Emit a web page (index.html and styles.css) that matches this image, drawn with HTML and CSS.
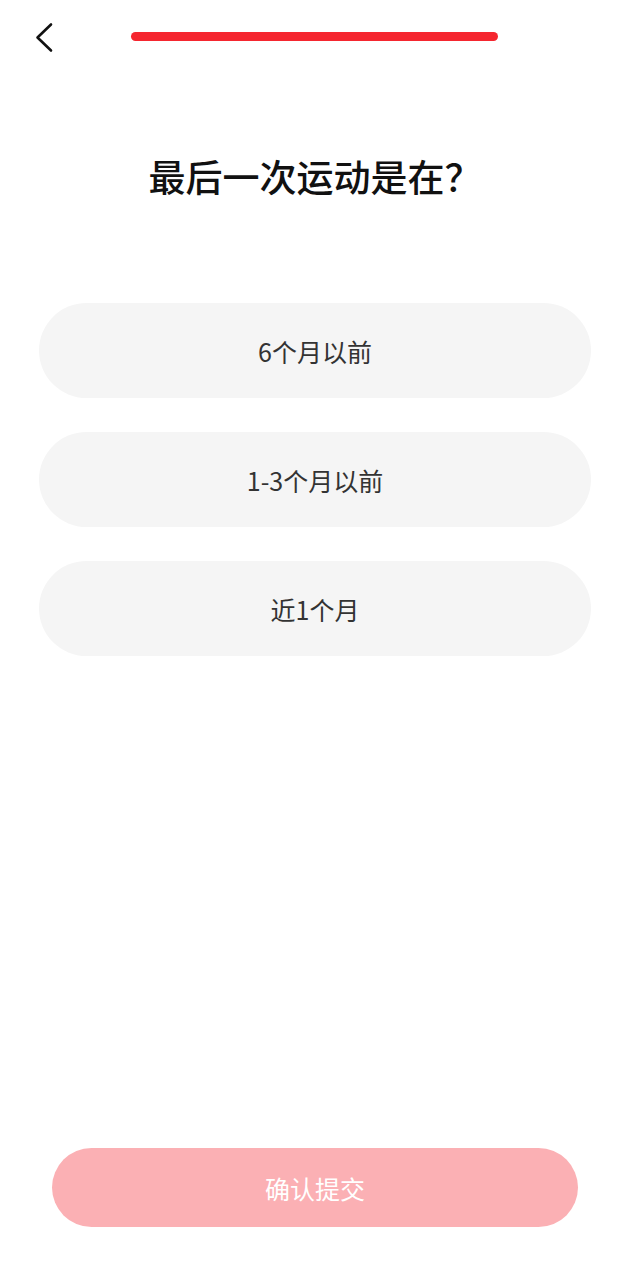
FILE: index.html
```html
<!DOCTYPE html>
<html lang="zh-CN">
<head>
  <meta charset="UTF-8">
  <meta name="viewport" content="width=device-width, initial-scale=1.0">
  <title>运动问卷</title>
  <link rel="stylesheet" href="styles.css">
</head>
<body>
  <div class="page">
    <div class="top-bar">
      <!-- 返回 -->
      <span class="back-btn">
        <svg width="20" height="31" viewBox="0 0 20 31">
          <path d="M17 2.5 L3.5 15.5 L17 28.5" fill="none" stroke="#111" stroke-width="2.6" stroke-linecap="round" stroke-linejoin="round"/>
        </svg>
      </span>
      <!-- 进度条 -->
      <div class="progress"></div>
    </div>

    <h1 class="question">最后一次运动是在？</h1>

    <ul class="option-list">
      <li class="option">6个月以前</li>
      <li class="option">1-3个月以前</li>
      <li class="option">近1个月</li>
    </ul>

    <div class="footer">
      <button class="submit-btn">确认提交</button>
    </div>
  </div>
</body>
</html>
```

FILE: styles.css
```css
body {
    margin: 0;
    background: #fff;
    font-family: "Noto Sans CJK SC", "Noto Sans", sans-serif;
    color: #333;
}
.page {
    width: 630px;
    height: 1280px;
    display: flex;
    flex-direction: column;
}
.top-bar {
    display: flex;
    align-items: center;
    height: 72px;
    padding-left: 34px;
}
.back-btn {
    display: flex;
    width: 20px;
    height: 31px;
    margin-top: 2px;
}
.progress {
    width: 367px;
    height: 9px;
    margin-left: 77px;
    border-radius: 5px;
    background: #f5262f;
}
.question {
    margin: 74px 0 0;
    text-align: center;
    font-size: 37px;
    font-weight: 500;
    line-height: 60px;
    color: #111;
}
.option-list {
    list-style: none;
    margin: 97px 0 0;
    padding: 0 39px;
    display: flex;
    flex-direction: column;
    gap: 34px;
}
.option {
    height: 95px;
    border-radius: 48px;
    background: #f5f5f5;
    display: flex;
    align-items: center;
    justify-content: center;
    font-size: 25px;
    color: #333;
}
.footer {
    margin-top: auto;
    padding: 0 52px 53px;
}
.submit-btn {
    width: 100%;
    height: 79px;
    border: none;
    border-radius: 40px;
    background: #fbb0b4;
    color: #fff;
    font-family: inherit;
    font-size: 25px;
}
```
